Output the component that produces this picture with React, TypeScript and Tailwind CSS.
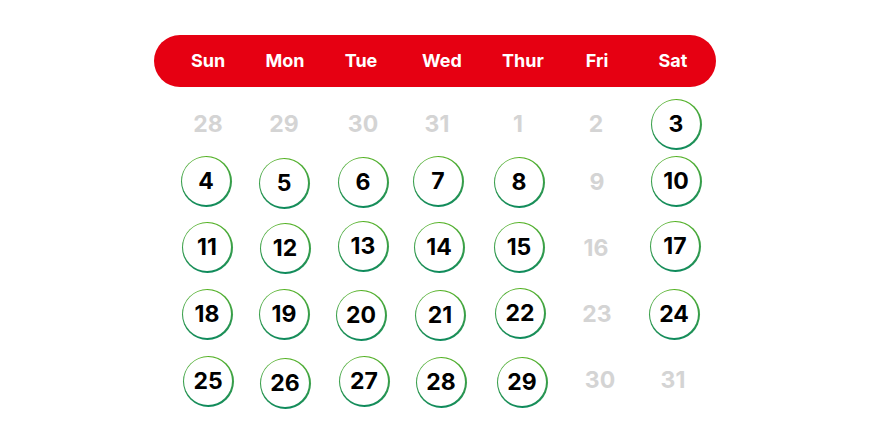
const days = [
  { label: 'Sun', dx: 1 },
  { label: 'Mon', dx: 0 },
  { label: 'Tue', dx: -2 },
  { label: 'Wed', dx: 1 },
  { label: 'Thur', dx: 4 },
  { label: 'Fri', dx: 0 },
  { label: 'Sat', dx: -2 },
]

type Cell = { n: number; on: boolean; dx?: number; dy?: number }

// each row: 7 cells, dx/dy are the small hand-placed offsets of the original
const rows: Cell[][] = [
  [
    { n: 28, on: false, dx: 1 },
    { n: 29, on: false, dx: -1 },
    { n: 30, on: false },
    { n: 31, on: false, dx: -4 },
    { n: 1, on: false, dx: -1 },
    { n: 2, on: false, dx: -1 },
    { n: 3, on: true, dx: 1 },
  ],
  [
    { n: 4, on: true, dx: -1, dy: -1 },
    { n: 5, on: true, dx: -1, dy: 1 },
    { n: 6, on: true },
    { n: 7, on: true, dx: -3, dy: -1 },
    { n: 8, on: true },
    { n: 9, on: false },
    { n: 10, on: true, dx: 1, dy: -1 },
  ],
  [
    { n: 11, on: true, dy: -1 },
    { n: 12, on: true },
    { n: 13, on: true, dy: -2 },
    { n: 14, on: true, dx: -2, dy: -1 },
    { n: 15, on: true, dy: -1 },
    { n: 16, on: false, dx: -1 },
    { n: 17, on: true, dy: -2 },
  ],
  [
    { n: 18, on: true },
    { n: 19, on: true, dx: -1 },
    { n: 20, on: true, dx: -2, dy: 1 },
    { n: 21, on: true, dx: -1, dy: 1 },
    { n: 22, on: true, dx: 1, dy: -1 },
    { n: 23, on: false },
    { n: 24, on: true, dx: -1 },
  ],
  [
    { n: 25, on: true, dx: 1, dy: 1 },
    { n: 26, on: true, dy: 3 },
    { n: 27, on: true, dx: 1, dy: 1 },
    { n: 28, on: true, dy: 2 },
    { n: 29, on: true, dx: 3, dy: 2 },
    { n: 30, on: false, dx: 3 },
    { n: 31, on: false, dx: -2 },
  ],
]

function Day({ cell }: { cell: Cell }) {
  const shift = { transform: `translate(${cell.dx ?? 0}px, ${cell.dy ?? 0}px)` }

  if (!cell.on) {
    return (
      <span className="text-[23px] font-bold leading-none text-[#d4d4d4]" style={shift}>
        {cell.n}
      </span>
    )
  }

  return (
    <div
      className="w-[51px] h-[51px] rounded-full p-[1.5px] bg-linear-to-b from-[#55b223] to-[#0c8a5c]"
      style={shift}
    >
      <div className="w-full h-full rounded-full bg-white flex items-center justify-center">
        <span className="text-[23px] font-bold leading-none text-black">{cell.n}</span>
      </div>
    </div>
  )
}

export default function App() {
  return (
    <div
      className="w-[870px] h-[440px] bg-white overflow-hidden"
      style={{ fontFamily: 'Inter, "Liberation Sans", sans-serif' }}
    >
      <div className="w-[562px] mx-auto pt-[35px]">
        {/* ── Header ── */}
        <div className="h-[52px] rounded-full bg-[#e60012] grid grid-cols-7 items-center pl-[14px] pr-[2px]">
          {days.map(d => (
            <div key={d.label} className="flex justify-center">
              <span
                className="text-[18px] font-bold text-white leading-none"
                style={{ transform: `translateX(${d.dx}px)` }}
              >
                {d.label}
              </span>
            </div>
          ))}
        </div>

        {/* ── Days ── */}
        <div className="mt-[12px] pl-[14px] pr-[2px] grid grid-cols-7 grid-rows-[50px_66px_66px_66px_66px]">
          {rows.flat().map((c, i) => (
            <div key={i} className="flex items-center justify-center">
              <Day cell={c} />
            </div>
          ))}
        </div>
      </div>
    </div>
  )
}
